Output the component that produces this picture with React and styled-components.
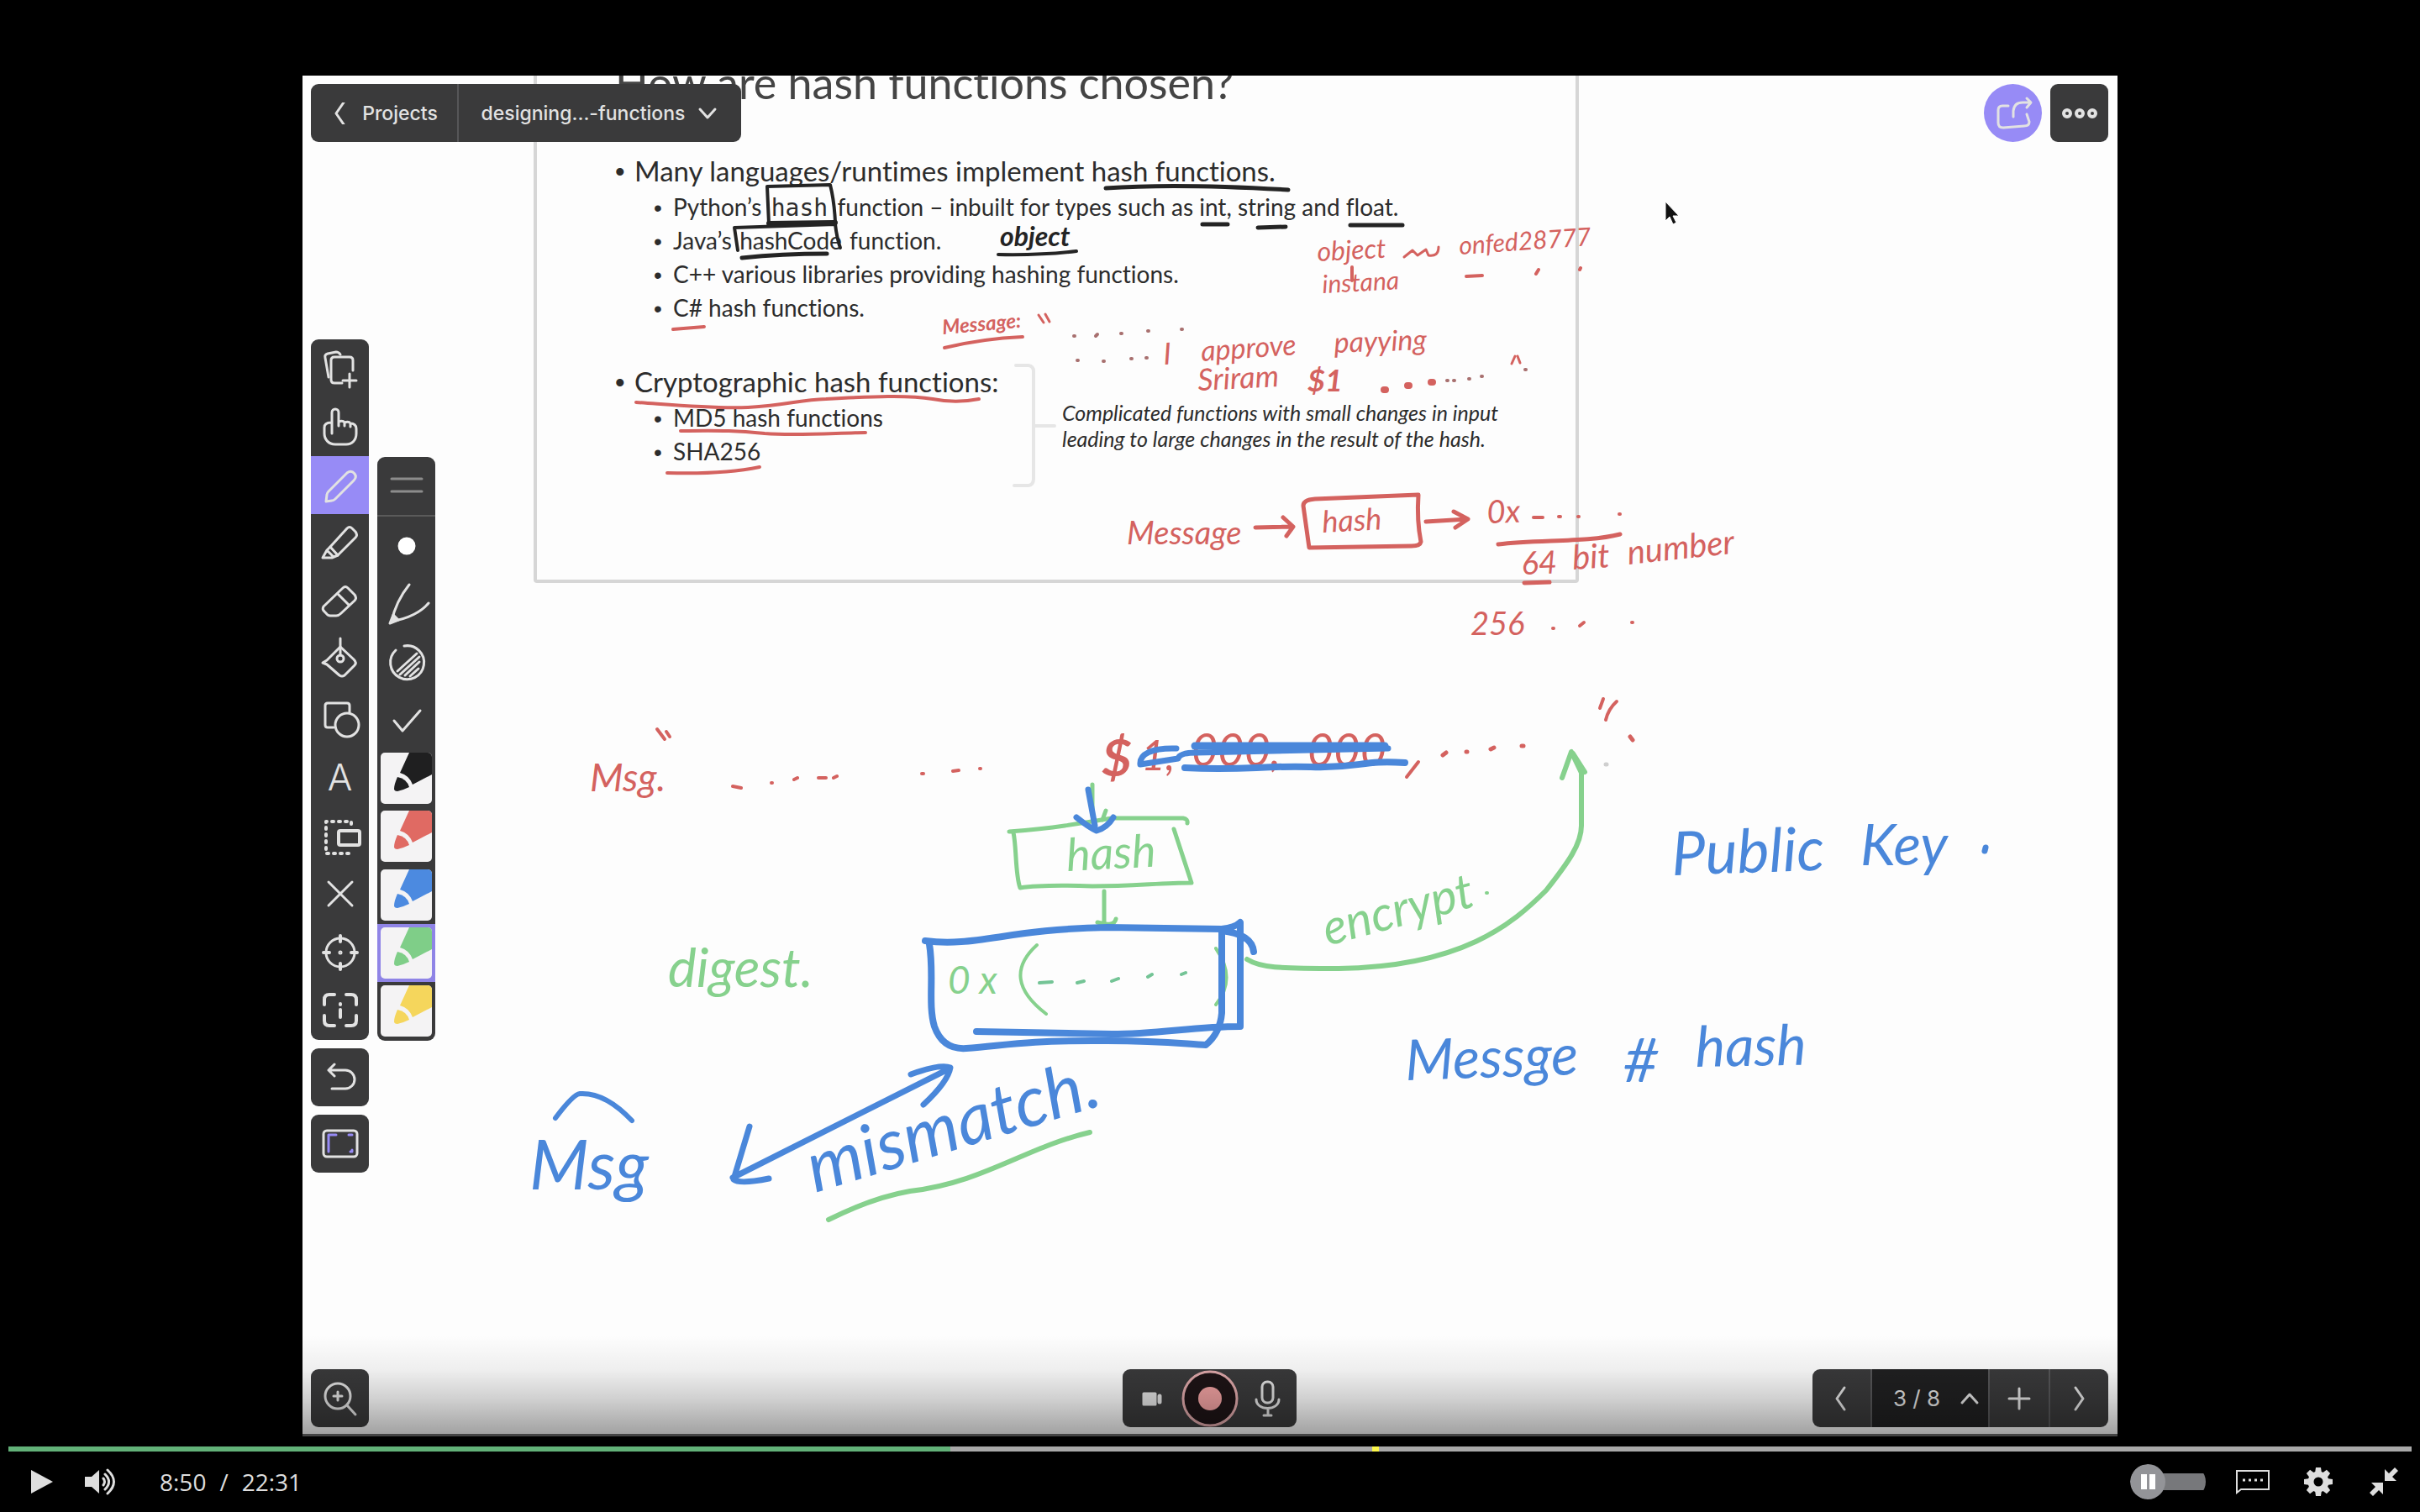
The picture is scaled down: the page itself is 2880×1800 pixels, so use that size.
import React from "react";
import styled, { createGlobalStyle, css } from "styled-components";

const RED = "#d4625f";
const BLUE = "#4a87da";
const GREEN = "#86d18d";
const BLACK = "#242424";
const PURPLE = "#978bf6";
const PANEL = "#3a3a3b";

const GlobalStyle = createGlobalStyle`
  * { box-sizing: border-box; }
  body { margin: 0; background: #000; }
`;

/* ---------- player shell ---------- */

const Player = styled.main`
  min-height: 100vh;
  padding-top: 90px;
  background: #000;
  display: flex;
  flex-direction: column;
  align-items: center;
  font-family: "Open Sans", "Noto Sans", sans-serif;
`;

const Video = styled.section`
  position: relative;
  width: 75%;
  aspect-ratio: 4 / 3;
  overflow: hidden;
  background: #fdfdfd;
`;

const Shade = styled.div`
  position: absolute;
  inset: auto 0 0 0;
  height: 120px;
  pointer-events: none;
  border-bottom: 3px solid #444;
  background: linear-gradient(to bottom, rgba(0, 0, 0, 0), rgba(0, 0, 0, 0.06) 35%, rgba(0, 0, 0, 0.18) 65%, rgba(0, 0, 0, 0.36));
`;

const Timeline = styled.div`
  position: relative;
  align-self: stretch;
  display: flex;
  height: 6px;
  margin: 12px 10px 0;
`;

const Seek = styled.input`
  appearance: none;
  flex: 1;
  height: 6px;
  margin: 0;
  background: linear-gradient(to right, #62b178 ${(p) => p.$played}%, #a8a8a8 ${(p) => p.$played}%);
  &::-webkit-slider-thumb { appearance: none; width: 0; height: 0; }
`;

const Cue = styled.span`
  position: absolute;
  left: 56.75%;
  width: 8px;
  height: 6px;
  background: #fbf64b;
`;

const Controls = styled.div`
  align-self: stretch;
  height: 72px;
  padding: 0 21px 0 28px;
  display: flex;
  align-items: center;
  justify-content: space-between;
  color: #dedede;
`;

const ControlGroup = styled.div`
  display: flex;
  align-items: center;
  gap: ${(p) => p.$gap}px;
`;

const ControlButton = styled.button`
  width: 44px;
  height: 44px;
  padding: 0;
  border: 0;
  background: none;
  color: inherit;
  display: grid;
  place-items: center;
`;

const Time = styled.div`
  margin-left: 22px;
  display: flex;
  gap: 16px;
  font-size: 28px;
  line-height: 40px;
`;

const AutoplayToggle = styled.label`
  width: 90px;
  height: 42px;
  display: flex;
  align-items: center;
  border-radius: 21px;
  background: linear-gradient(#77787b, #77787b) right center / 68px 20px no-repeat;
  clip-path: inset(0 round 21px 10px 10px 21px);
  input { position: absolute; opacity: 0; margin: 0; }
`;

const Knob = styled.span`
  width: 42px;
  height: 42px;
  border-radius: 50%;
  background: #939498;
  display: flex;
  align-items: center;
  justify-content: center;
  gap: 3px;
  &::before, &::after { content: ""; width: 7px; height: 18px; background: #fff; }
`;

/* ---------- slide on the board ---------- */

const Slide = styled.article`
  position: absolute;
  left: 275px;
  top: -60px;
  width: 1244px;
  padding: 40px 60px 133px 93px;
  border: 4px solid #d6d6d6;
  border-radius: 4px;
  font-family: Lato, "Open Sans", sans-serif;
  font-variant-ligatures: none;
  color: #2c2c2c;
`;

const SlideTitle = styled.h1`
  margin: 0 0 61px;
  font-size: 52px;
  line-height: 48px;
  font-weight: 400;
  color: #444;
`;

const Topics = styled.ul`
  margin: 0;
  padding: 0;
  list-style: none;
`;

const Topic = styled.li`
  font-size: ${(p) => (p.$sub ? 28 : 33)}px;
  line-height: 40px;
  padding-left: 23px;
  white-space: nowrap;
  &::before {
    content: "•";
    display: inline-block;
    width: 23px;
    margin-left: -23px;
    line-height: 20px;
    font-family: "Liberation Sans", sans-serif;
  }
  > ul { margin: 3px 0 0 23px; }
`;

const Code = styled.code`
  display: inline-block;
  width: ${(p) => p.$width}px;
  margin: 0 8px;
  text-align: center;
  font-size: 28px;
  font-family: ${(p) => (p.$mono ? '"DejaVu Sans Mono", monospace' : "inherit")};
  line-height: 32px;
`;

const Split = styled.div`
  display: flex;
  align-items: flex-start;
  margin-top: 48px;
`;

const Aside = styled.p`
  margin: 42px 0 0 75px;
  font-size: 25px;
  line-height: 31px;
  font-style: italic;
  white-space: nowrap;
`;

const TopicColumn = styled.div`
  width: 457px;
`;

/* ---------- ink ---------- */

const Ink = styled.svg`
  position: absolute;
  left: 0;
  top: 0;
  width: 2160px;
  height: 1620px;
  overflow: visible;
`;

const Stroke = styled.path`
  fill: none;
  stroke: ${(p) => p.$color};
  stroke-width: ${(p) => p.$w || 5}px;
  stroke-linecap: round;
  stroke-linejoin: round;
`;

const Word = styled.text`
  fill: ${(p) => p.$color};
  font-family: Lato, "Open Sans", sans-serif;
  font-size: ${(p) => p.$size}px;
  font-style: italic;
  font-weight: ${(p) => (p.$bold ? 700 : 400)};
`;

const words = [
  ["object", 1190, 293, 32, BLACK, 0, true],
  ["object", 1568, 311, 32, RED, -3],
  ["onfed28777", 1737, 303, 30, RED, -4],
  ["instana", 1574, 349, 30, RED, -3],
  ["Message:", 1122, 398, 24, RED, -5, true],
  ["I", 1385, 434, 36, RED, -3],
  ["approve", 1430, 430, 34, RED, -4],
  ["payying", 1588, 420, 34, RED, -2],
  ["Sriram", 1426, 465, 36, RED, -3],
  ["$1", 1556, 466, 36, RED, 0, true],
  ["Message", 1341, 648, 38, RED, 0],
  ["hash", 1574, 634, 36, RED, -3],
  ["0x", 1770, 623, 38, RED, -2],
  ["64", 1811, 684, 38, RED, -2],
  ["bit", 1872, 678, 40, RED, -4],
  ["number", 1938, 672, 40, RED, -6],
  ["256", 1750, 756, 38, RED, 0],
  ["Msg.", 702, 942, 46, RED, 0],
  ["$", 1311, 924, 62, RED, 0, true],
  ["1,", 1358, 917, 50, RED, 0],
  ["000,", 1418, 912, 54, RED, 0],
  ["000", 1556, 912, 54, RED, 0],
  ["hash", 1270, 1037, 54, GREEN, -3],
  ["0 x", 1128, 1183, 46, GREEN, 0],
  ["digest.", 795, 1175, 64, GREEN, 0],
  ["encrypt", 1580, 1126, 58, GREEN, -15],
  ["Public", 1990, 1042, 72, BLUE, -2],
  ["Key", 2214, 1030, 68, BLUE, 0],
  ["Messge", 1673, 1286, 67, BLUE, -2],
  ["#", 1932, 1288, 72, BLUE, 0],
  ["hash", 2018, 1270, 67, BLUE, -1],
  ["Msg", 630, 1416, 82, BLUE, 0],
  ["mismatch.", 970, 1420, 84, BLUE, -17],
];

const strokes = [
  ["M1316 224Q1400 218 1533 226", BLACK],
  ["M913 222L988 220Q993 240 994 265L915 266Z", BLACK, 4],
  ["M915 266L994 265", BLACK, 6],
  ["M878 298L874 271L994 267Q996 284 1000 295", BLACK, 4],
  ["M883 307Q930 302 984 302", BLACK],
  ["M1431 267H1461M1497 271L1530 270M1607 268H1669", BLACK, 5],
  ["M1188 303Q1240 304 1281 299", BLACK, 4],
  ["M801 392L838 389", RED, 4],
  ["M757 479C800 482 850 487 890 485C940 482 950 476 983 475C1040 472 1080 470 1110 475C1130 479 1150 478 1165 475", RED, 4],
  ["M810 513C860 512 880 513 910 516C950 519 1000 515 1030 515", RED, 4],
  ["M794 563Q860 565 904 556", RED, 4],
  ["M1671 306L1681 298L1687 304L1697 297L1700 304Q1712 306 1712 294", RED, 3],
  ["M1609 318V334M1745 329L1764 328M1828 326L1831 321M1880 321L1881 319", RED, 4],
  ["M1124 414Q1170 403 1217 401", RED, 4],
  ["M1236 375L1242 384M1244 374L1249 383", RED, 3],
  ["M1278 400h1M1304 400l2 -2M1334 397h1M1366 394h1M1406 392h1M1282 429h1M1313 430h1M1346 427h1M1364 426h1", "#a8706f", 4],
  ["M1647 464h2M1675 459h2M1703 455h2", RED, 8],
  ["M1722 453h1M1730 453h1M1748 451h1M1763 448h1M1815 440h1", "#a8706f", 4],
  ["M1799 433L1803 424M1806 424L1809 432", RED, 3],
  ["M1494 628L1538 627M1527 616L1539 627L1531 638", RED],
  ["M1551 602Q1551 595 1565 594L1688 589Q1686 620 1691 645Q1690 650 1680 650L1558 652Z", RED],
  ["M1697 621L1746 618M1730 609L1747 618L1732 628", RED],
  ["M1825 616H1836M1855 615h2M1878 615h1M1927 612h1", RED, 4],
  ["M1783 648C1830 642 1890 646 1928 636", RED],
  ["M1814 694L1844 693", RED],
  ["M1848 748h1M1880 745L1885 741M1942 741h1", RED, 4],
  ["M1904 843L1908 832M1911 857Q1914 844 1924 835", RED, 4],
  ["M1940 877L1943 881M1717 899L1721 896M1745 895h1M1774 892L1778 890M1811 888h2", RED, 5],
  ["M1911 910h1", "#cfcfcf", 5],
  ["M1688 907L1674 925", RED, 4],
  ["M872 936L882 938M918 932h1M945 928L949 926M974 926L983 926M992 926L996 924M1097 921h2M1134 918L1141 917M1166 915h1", RED, 4],
  ["M782 868L791 880M793 871L797 877", RED, 4],
  ["M1400 891C1370 890 1356 898 1357 910L1402 903Q1404 896 1424 896L1652 891", BLUE, 7],
  ["M1422 888L1648 888", BLUE, 9],
  ["M1410 914C1480 918 1500 911 1560 913S1620 904 1672 908", BLUE, 8],
  ["M1300 934V970M1316 965L1312 976", GREEN],
  ["M1201 990Q1240 987 1267 983T1323 974L1408 974Q1414 975 1413 980M1206 991C1210 1010 1208 1040 1214 1057Q1240 1053 1300 1055C1350 1055 1380 1051 1418 1051L1397 987", GREEN],
  ["M1314 1061V1100M1306 1098Q1326 1104 1328 1094", GREEN],
  ["M1234 1125Q1190 1165 1245 1207M1447 1129Q1472 1165 1447 1196", GREEN, 4],
  ["M1237 1170L1252 1169M1282 1170L1290 1168M1323 1168L1331 1165M1366 1163L1371 1160M1406 1160L1411 1158", "#74c496", 4],
  ["M1769 1063h1", GREEN, 4],
  ["M1484 1142C1500 1152 1520 1153 1593 1153C1740 1151 1800 1100 1840 1060C1866 1027 1882 1005 1882 983V920L1870 895L1859 926M1872 897L1886 919", GREEN, 6],
  ["M1295 940L1303 983M1281 973Q1296 985 1305 989Q1318 985 1325 973", BLUE, 7],
  ["M1101 1120C1160 1128 1200 1106 1318 1104L1454 1106Q1470 1104 1476 1098V1222C1420 1222 1380 1231 1323 1231L1162 1228", BLUE, 8],
  ["M1106 1124C1112 1160 1104 1195 1112 1222Q1122 1250 1150 1248C1200 1244 1220 1239 1300 1239C1380 1238 1410 1243 1435 1244Q1452 1230 1454 1206V1108Q1490 1112 1492 1133", BLUE, 8],
  ["M2363 1009L2362 1013", BLUE, 7],
  ["M661 1331Q682 1303 690 1302Q720 1300 752 1334", BLUE, 6],
  ["M872 1402L1130 1272M1084 1279Q1120 1266 1131 1271Q1128 1288 1099 1315M892 1341L873 1404Q880 1410 915 1403", BLUE, 7],
  ["M986 1452C1030 1430 1060 1422 1083 1418C1170 1408 1220 1366 1297 1348", GREEN, 6],
];

const InkLayer = () => (
  <Ink viewBox="360 90 2160 1620">
    <Stroke $color="#e6e6e6" $w={4} d="M1209 435H1224Q1230 436 1230 442V570Q1230 577 1224 578H1207M1232 507H1255" />
    {words.map(([t, x, y, size, color, turn, bold]) => (
      <Word key={t + x} x={x} y={y} $size={size} $color={color} $bold={bold} transform={`rotate(${turn} ${x} ${y})`}>
        {t}
      </Word>
    ))}
    {strokes.map(([d, color, w]) => (
      <Stroke key={d} d={d} $color={color} $w={w} />
    ))}
    <path d="M1982 240V263L1987 258L1991 267L1995 265L1991 257H1998Z" fill="#111" stroke="#fff" strokeWidth="1" />
  </Ink>
);

/* ---------- whiteboard chrome ---------- */

const Chrome = styled.div`
  position: absolute;
  inset: 0;
  padding: 10px 11px 11px 10px;
  display: flex;
  flex-direction: column;
  justify-content: space-between;
  font-family: Inter, Roboto, sans-serif;
  color: #e2e2e2;
`;

const Bar = styled.div`
  display: grid;
  grid-template-columns: 1fr auto 1fr;
  > :last-child { justify-self: end; }
`;

const Cluster = styled.div`
  display: flex;
  gap: 10px;
`;

const panel = css`
  background: ${PANEL};
  border-radius: 9px;
  overflow: hidden;
`;

const Group = styled.div`
  ${panel}
  display: flex;
  height: 69px;
  justify-self: start;
`;

const Tool = styled.button`
  width: ${(p) => p.$width || 69}px;
  min-height: 0;
  padding: 0 0 0 ${(p) => p.$inset || 0}px;
  border: 0;
  border-left: ${(p) => (p.$divided ? "2px solid #565658" : "0")};
  background: ${(p) => (p.$active ? PURPLE : p.$dark ? "#202021" : "none")};
  color: inherit;
  font: inherit;
  font-size: ${(p) => (p.$dark ? 26 : 23)}px;
  font-weight: ${(p) => (p.$dark ? 400 : 500)};
  display: flex;
  align-items: center;
  justify-content: center;
  gap: ${(p) => p.$gap || 0}px;
  white-space: nowrap;
`;

const SoloTool = styled(Tool)`
  ${panel}
  height: 69px;
  border-radius: ${(p) => (p.$round ? "50%" : "9px")};
  background: ${(p) => (p.$round ? PURPLE : PANEL)};
`;

const TextTool = styled.span`
  font-size: 44px;
  font-weight: 300;
`;

const Rails = styled.div`
  display: flex;
  align-items: flex-start;
  gap: 10px;
`;

const Column = styled.div`
  display: flex;
  flex-direction: column;
  gap: 10px;
`;

const Rail = styled.div`
  ${panel}
  width: 69px;
  height: ${(p) => p.$height}px;
  margin-top: ${(p) => p.$drop || 0}px;
  display: flex;
  flex-direction: column;
  > * { flex: 1; }
`;

const Handle = styled(Tool)`
  border-bottom: 2px solid #5a5a5a;
  color: #8c8c8c;
`;

const Swatch = styled.button`
  width: 69px;
  padding: 0;
  border: 0;
  background: ${(p) => (p.$active ? "#8f84e6" : "none")};
  display: grid;
  place-items: center;
  svg { background: #f4f3f4; border-radius: 5px; }
`;

const Icon = ({ children, size = 69, w = 3 }) => (
  <svg width={size} height={size} viewBox={`0 0 ${size} ${size}`} fill="none" stroke="currentColor" strokeWidth={w} strokeLinecap="round" strokeLinejoin="round" aria-hidden="true">
    {children}
  </svg>
);

const tools = [
  ["Add page", <><path d="M21 45L17 22Q16 18 20 17L30 15Q33 15 35 18" /><path d="M50 37V25Q50 21 46 21H28Q24 21 24 25V48Q24 52 28 52H37M46 41V57M38 49H54" /></>],
  ["Pan", <path d="M25 43V18a4 4 0 0 1 8 0V34V29Q38 27 40 30V34V30Q45 28 47 31V35V31Q54 31 54 38V43C54 51 49 56 42 56H29C21 56 16 50 16 43V36Q16 30 24 30" />],
  ["Pencil", <path d="M18 54L19 46Q19 44 21 42L43 20Q48 16 52 21Q55 25 51 29L29 51Q27 53 25 53Z" />],
  ["Marker", <><path d="M23 39L43 17Q46 14 49 17L53 21Q56 25 53 28L32 49Z" /><path d="M23 39L19 43L14 52H25L32 49M19 43L27 51" /></>],
  ["Eraser", <><path d="M15 40L38 18Q41 15 44 18L52 26Q55 30 52 33L36 48Q33 51 30 51H23Q20 51 18 48L16 46Q13 43 15 40Z" /><path d="M32 25L45 38" /></>],
  ["Fill", <><path d="M35 19L51 34Q55 38 52 41L40 53Q37 55 34 53L19 40L14 38L19 35Z" /><path d="M35 9V29" /><circle cx="35" cy="33" r="4" /></>],
  ["Shapes", <><path d="M27 45H20Q17 45 17 42V19Q17 16 20 16H43Q46 16 46 19V27" /><circle cx="43" cy="42" r="14" /></>],
  ["Text", null],
  ["Select", <><path d="M48 21V18H18V56H48V53" strokeDasharray="2 6" strokeWidth="4" /><rect x="33" y="29" width="25" height="17" rx="2" strokeWidth="4" /></>],
  ["Delete", <path d="M21 21L49 49M49 21L21 49" />],
  ["Target", <><circle cx="35" cy="35" r="17" /><circle cx="35" cy="35" r="1" /><path d="M35 15V22M35 48V55M15 35H22M48 35H55" strokeWidth="4" /></>],
  ["Inspect", <><path d="M16 28V22Q16 16 22 16H28M42 16H48Q54 16 54 22V28M54 41V47Q54 53 48 53H42M28 53H22Q16 53 16 47V41" strokeWidth="4" /><path d="M35 27v1M35 34V43" strokeWidth="4" /></>],
];

const brushes = [
  ["Size", <circle cx="35" cy="35" r="9" fill="#fff" stroke="#fff" />],
  ["Nib", <><path d="M38 12Q22 32 17 56Q48 50 61 34" /><path d="M19 48L15 58L25 54Z" fill="currentColor" /></>],
  ["Opacity", <><path d="M32 15A20 20 0 1 1 22 20" /><path d="M24 45L47 24M27 49L50 28M33 50L50 34M39 51L49 42" /></>],
  ["Confirm", <path d="M20 35L30 47L51 23" />],
];

const pens = [
  ["Black pen", "#1f1f20"],
  ["Red pen", "#e06a63"],
  ["Blue pen", "#4c8ae0"],
  ["Green pen", "#7fce88"],
  ["Yellow pen", "#f5d65c"],
];

const Whiteboard = () => (
  <Chrome>
    <Bar>
      <Group>
        <Tool $width={174} $gap={12}>
          <Icon size={26} w={3}><path d="M16 0L7 13L16 26" /></Icon>
          Projects
        </Tool>
        <Tool $width={338} $gap={14} $divided>
          designing...-functions
          <Icon size={26}><path d="M4 8L13 18L22 8" /></Icon>
        </Tool>
      </Group>
      <span />
      <Cluster>
        <SoloTool $round aria-label="Share">
          <Icon><path d="M29 26H22Q17 26 17 31V46Q17 52 23 52L48 50Q54 50 54 45L51 36" /><path d="M35 39V32Q36 22 46 22H54M51 17L56 22L51 28" /></Icon>
        </SoloTool>
        <SoloTool aria-label="More">
          <Icon w={4}><circle cx="20" cy="35" r="4" /><circle cx="35" cy="35" r="4" /><circle cx="50" cy="35" r="4" /></Icon>
        </SoloTool>
      </Cluster>
    </Bar>
    <Rails>
      <Column>
        <Rail $height={834}>
          {tools.map(([name, art]) => (
            <Tool key={name} aria-label={name} $active={name === "Pencil"}>
              {art ? <Icon>{art}</Icon> : <TextTool>A</TextTool>}
            </Tool>
          ))}
        </Rail>
        <SoloTool aria-label="Undo"><Icon><path d="M21 26H41a11 11 0 0 1 0 22H25M28 19L21 26L28 33" /></Icon></SoloTool>
        <SoloTool aria-label="Frame">
          <Icon><rect x="15" y="19" width="40" height="31" rx="4" /><path d="M30 24H21V44M47 44H49V42M45 24H49" stroke={PURPLE} /></Icon>
        </SoloTool>
      </Column>
      <Rail $height={695} $drop={140}>
        <Handle aria-label="Move panel"><Icon><path d="M17 26H53M17 41H53" /></Icon></Handle>
        {brushes.map(([name, art]) => (
          <Tool key={name} aria-label={name}><Icon>{art}</Icon></Tool>
        ))}
        {pens.map(([name, color]) => (
          <Swatch key={name} aria-label={name} $active={name === "Green pen"}>
            <svg width="61" height="61" viewBox="0 0 61 61" fill={color}>
              <path d="M34 0H61V26L38 38Q34 27 23 24Z" />
              <path d="M20 29Q16 38 16 43Q16 46 20 46Q28 44 34 41Q31 31 20 29Z" />
            </svg>
          </Swatch>
        ))}
      </Rail>
    </Rails>
    <Bar>
      <Group>
        <Tool aria-label="Zoom">
          <Icon><circle cx="32" cy="32" r="15" /><path d="M43 43L53 54M32 27V37M27 32H37" /></Icon>
        </Tool>
      </Group>
      <Group>
        <Tool aria-label="Camera">
          <Icon><path d="M25 29H39V42H25Z" fill="currentColor" /><path d="M44 32V39" strokeWidth="5" /></Icon>
        </Tool>
        <Tool aria-label="Record">
          <Icon><circle cx="35" cy="35" r="32" fill="#1e1416" stroke="#e0a9ab" /><circle cx="35" cy="35" r="14" fill="#f0a1a1" stroke="none" /></Icon>
        </Tool>
        <Tool aria-label="Microphone">
          <Icon><rect x="28" y="15" width="13" height="25" rx="6" /><path d="M21 36C21 50 48 50 48 36M35 47V55M30 55H39" /></Icon>
        </Tool>
      </Group>
      <Group>
        <Tool aria-label="Previous page"><Icon size={34}><path d="M20 4L11 17L20 30" /></Icon></Tool>
        <Tool $width={140} $gap={22} $inset={16} $dark $divided>
          3 / 8
          <Icon size={26}><path d="M4 18L13 8L22 18" /></Icon>
        </Tool>
        <Tool $width={72} $divided aria-label="Add page"><Icon size={34}><path d="M17 5V29M5 17H29" /></Icon></Tool>
        <Tool $width={71} $divided aria-label="Next page"><Icon size={34}><path d="M12 4L21 17L12 30" /></Icon></Tool>
      </Group>
    </Bar>
  </Chrome>
);

/* ---------- page ---------- */

const gearTeeth = [0, 45, 90, 135, 180, 225, 270, 315];

export default function App() {
  return (
    <Player>
      <GlobalStyle />
      <Video>
        <Slide>
          <SlideTitle>How are hash functions chosen?</SlideTitle>
          <Topics>
            <Topic>
              Many languages/runtimes implement hash functions.
              <Topics>
                <Topic $sub>Python’s<Code $width={74} $mono>hash</Code>function – inbuilt for types such as int, string and float.</Topic>
                <Topic $sub>Java’s<Code $width={124}>hashCode</Code>function.</Topic>
                <Topic $sub>C++ various libraries providing hashing functions.</Topic>
                <Topic $sub>C# hash functions.</Topic>
              </Topics>
            </Topic>
          </Topics>
          <Split>
            <TopicColumn>
              <Topics>
                <Topic>
                  Cryptographic hash functions:
                  <Topics>
                    <Topic $sub>MD5 hash functions</Topic>
                    <Topic $sub>SHA256</Topic>
                  </Topics>
                </Topic>
              </Topics>
            </TopicColumn>
            <Aside>
              Complicated functions with small changes in input
              <br />
              leading to large changes in the result of the hash.
            </Aside>
          </Split>
        </Slide>
        <InkLayer />
        <Whiteboard />
        <Shade />
      </Video>
      <Timeline>
        <Seek type="range" aria-label="Seek" min="0" max="1351" defaultValue="530" $played={39.2} />
        <Cue />
      </Timeline>
      <Controls>
        <ControlGroup $gap={26}>
          <ControlButton aria-label="Play">
            <svg width="26" height="28" viewBox="0 0 26 28" fill="currentColor"><path d="M0 0L26 14L0 28Z" /></svg>
          </ControlButton>
          <ControlButton aria-label="Mute">
            <svg width="38" height="32" viewBox="0 0 38 32" fill="none" stroke="currentColor" strokeWidth="3" strokeLinecap="round">
              <path d="M0 10H8L17 2V30L8 22H0Z" fill="currentColor" stroke="none" />
              <path d="M22 12Q25 16 22 20M24 7Q33 16 24 25M27 2Q42 16 27 30" />
            </svg>
          </ControlButton>
          <Time><span>8:50</span><span>/</span><span>22:31</span></Time>
        </ControlGroup>
        <ControlGroup $gap={34}>
          <AutoplayToggle>
            <input type="checkbox" role="switch" aria-label="Autoplay" />
            <Knob />
          </AutoplayToggle>
          <ControlButton aria-label="Captions">
            <svg width="40" height="30" viewBox="0 0 40 30" fill="none" stroke="currentColor" strokeWidth="2">
              <path d="M1 28V2H39V24H6Z" />
              <path d="M8 13H34" strokeWidth="3" strokeDasharray="3 4" />
            </svg>
          </ControlButton>
          <ControlButton aria-label="Settings">
            <svg width="36" height="36" viewBox="-18 -18 36 36" fill="currentColor">
              {gearTeeth.map((a) => <path key={a} d="M-4 -10L-3 -17H3L4 -10Z" transform={`rotate(${a})`} />)}
              <circle r="9" fill="none" stroke="currentColor" strokeWidth="7" />
            </svg>
          </ControlButton>
          <ControlButton aria-label="Exit full screen">
            <svg width="36" height="36" viewBox="0 0 36 36" fill="currentColor">
              <path d="M19 3L24 8L31 1L35 5L28 12L33 17H19ZM17 33L12 28L5 35L1 31L8 24L3 19H17Z" />
            </svg>
          </ControlButton>
        </ControlGroup>
      </Controls>
    </Player>
  );
}
